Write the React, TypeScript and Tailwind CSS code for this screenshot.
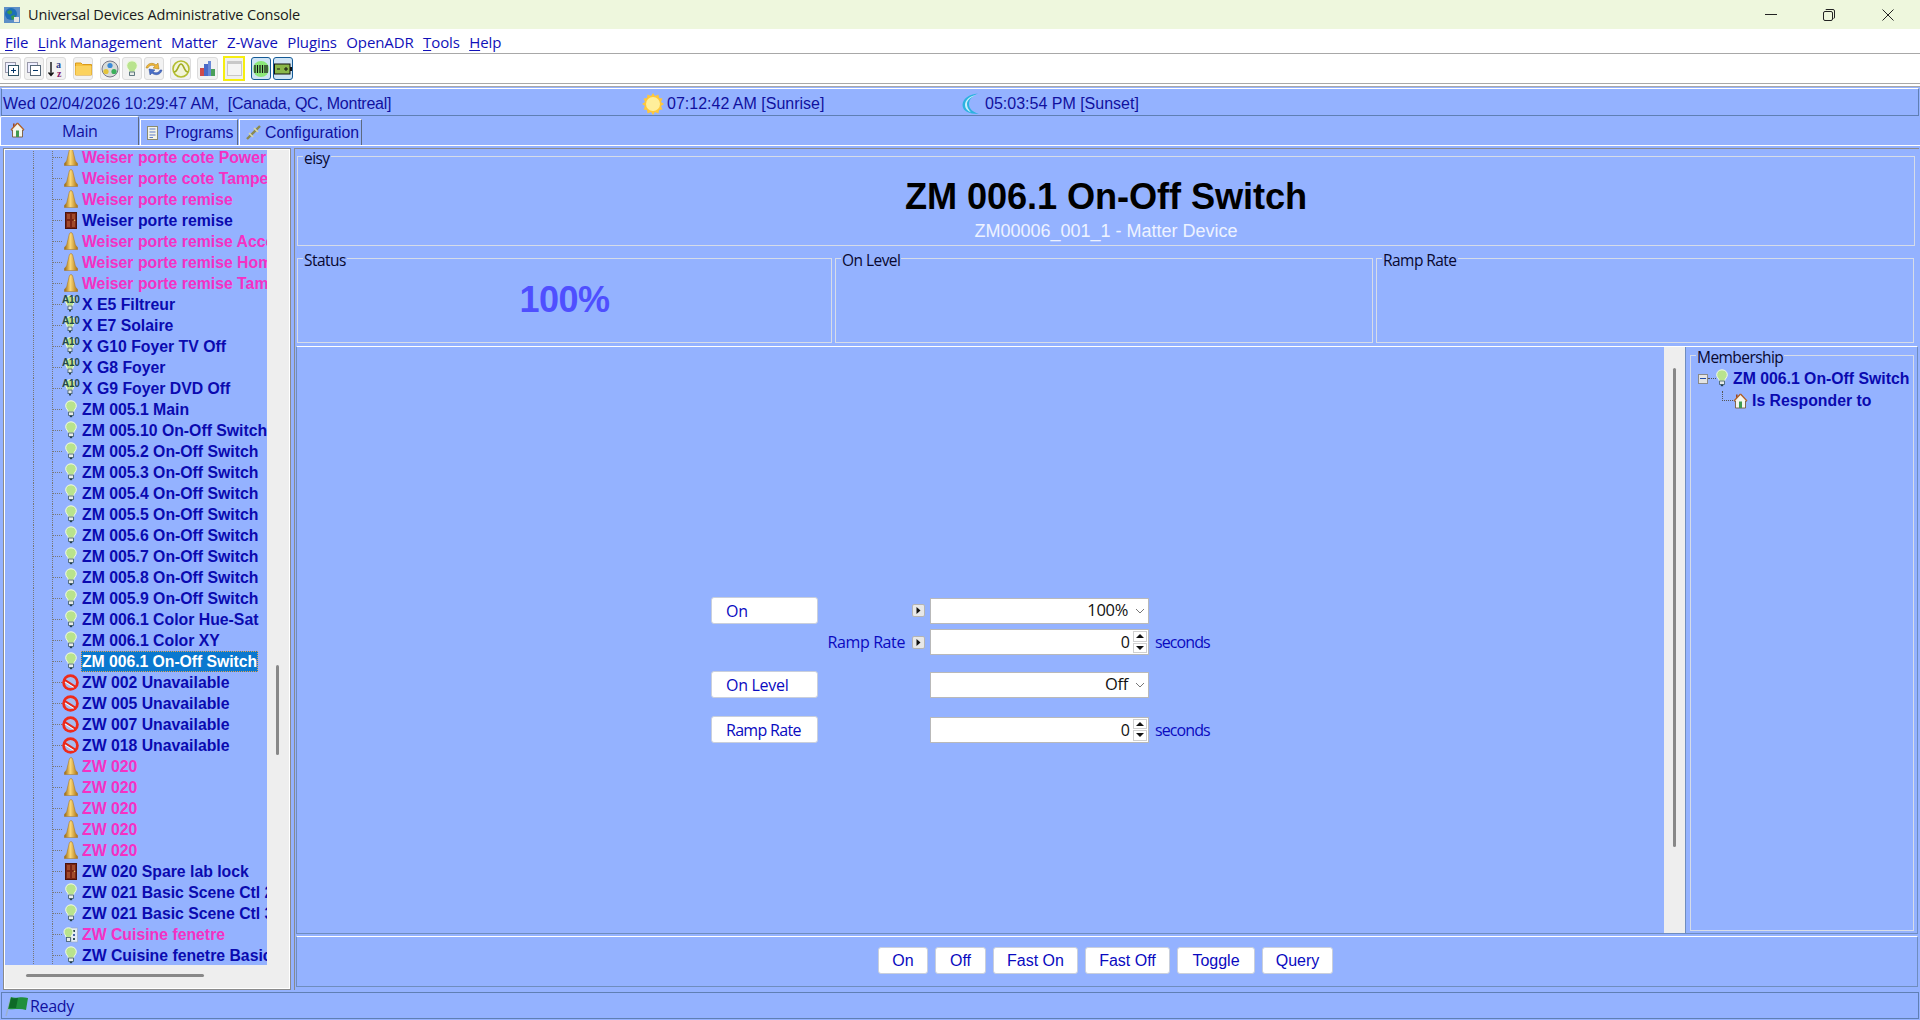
import React from "react";

const Cone = () => (
  <svg width="14" height="18" viewBox="0 0 14 18" className="shrink-0 -mt-[2px]">
    <defs>
      <linearGradient id="cg" x1="0" x2="1" y1="0" y2="0">
        <stop offset="0" stopColor="#96640c" />
        <stop offset="0.45" stopColor="#fbd878" />
        <stop offset="1" stopColor="#ac7210" />
      </linearGradient>
    </defs>
    <path d="M7 0.5 C8.6 0.5 9 3 9.4 5 L11.4 13 L13.6 15.5 L13.6 17.5 L0.4 17.5 L0.4 15.5 L2.6 13 L4.6 5 C5 3 5.4 0.5 7 0.5Z" fill="url(#cg)" stroke="#a8741a" strokeWidth="0.5" />
  </svg>
);
const Door = () => (
  <svg width="12" height="17" viewBox="0 0 12 17" className="shrink-0">
    <rect x="0.5" y="0.5" width="11" height="16" fill="#7a2414" stroke="#4c140c" />
    <rect x="2" y="2" width="3" height="5" fill="#a04a2c" />
    <rect x="7" y="2" width="3" height="5" fill="#a04a2c" />
    <rect x="2" y="9" width="3" height="6" fill="#a04a2c" />
    <rect x="7" y="9" width="3" height="6" fill="#a04a2c" />
    <circle cx="9.5" cy="8.2" r="0.8" fill="#e8c36a" />
  </svg>
);
const Bulb = () => (
  <svg width="12" height="18" viewBox="0 0 12 18" className="shrink-0 -mt-[2px]">
    <path d="M6 0.8 C9.2 0.8 11.3 3 11.3 5.8 C11.3 8.4 9 9.6 8.6 12 L3.4 12 C3 9.6 0.7 8.4 0.7 5.8 C0.7 3 2.8 0.8 6 0.8Z" fill="#b9e38d" stroke="#f3fbe6" strokeWidth="1" />
    <rect x="3.6" y="12" width="4.8" height="3.4" fill="#e8ece8" stroke="#3d5a66" strokeWidth="0.8" />
    <rect x="4.8" y="15.6" width="2.4" height="1.6" fill="#26404c" />
  </svg>
);
const A10 = () => (
  <div className="relative w-[17px] h-[18px] shrink-0 -mt-[2px]">
    <svg width="16" height="18" viewBox="0 0 16 18" className="absolute left-0 top-0">
      <path d="M8 0.8 C11.2 0.8 13 2.6 13 5 C13 7 11 8.4 10.6 11 L5.4 11 C5 8.4 3 7 3 5 C3 2.6 4.8 0.8 8 0.8Z" fill="#b9e38d" stroke="#f3fbe6" strokeWidth="1" />
      <rect x="6" y="11" width="4" height="3.6" fill="#e8ece8" stroke="#3d5a66" strokeWidth="0.8" />
      <rect x="7" y="15" width="2" height="1.5" fill="#26404c" />
    </svg>
    <span className="absolute left-[0px] top-[-1px] text-[10px] leading-[12px] font-bold text-[#24484a] font-['Liberation_Sans',sans-serif] tracking-[-0.3px]">A10</span>
  </div>
);
const NoEntry = () => (
  <svg width="17" height="17" viewBox="0 0 16 16" className="shrink-0">
    <circle cx="8" cy="8" r="7.8" fill="#ee2a1c" />
    <circle cx="8" cy="8" r="5.2" fill="#a8bdf0" />
    <path d="M3 4.6 L13 11 L11.8 12.8 L2 6.6Z" fill="#e8281a" />
    <path d="M2.8 7.4 L11 12.6" stroke="#fff" strokeWidth="1" />
  </svg>
);
const Scene = () => (
  <svg width="15" height="16" viewBox="0 0 15 16" className="shrink-0">
    <rect x="8" y="1" width="6.5" height="14" fill="#e4ecf6" stroke="#9aa8b8" strokeWidth="0.6" />
    <rect x="10" y="3" width="2" height="2" fill="#355" />
    <rect x="10" y="7" width="2" height="2" fill="#46a" />
    <rect x="10" y="11" width="2" height="2" fill="#355" />
    <path d="M5.5 0.8 C8.4 0.8 10 2.6 10 5 C10 7.2 8.2 8.2 7.8 10.5 L3.2 10.5 C2.8 8.2 1 7.2 1 5 C1 2.6 2.6 0.8 5.5 0.8Z" fill="#b9e38d" stroke="#f3fbe6" strokeWidth="1" />
    <rect x="3.5" y="10.5" width="4" height="4" fill="#e8ece8" stroke="#3d5a66" strokeWidth="0.8" />
  </svg>
);
const House = () => (
  <svg width="15" height="16" viewBox="0 0 15 16" className="shrink-0">
    <path d="M7.5 1 L14 8 L12.5 8 L12.5 15 L2.5 15 L2.5 8 L1 8Z" fill="#f4f7ee" stroke="#7a5a3a" strokeWidth="0.9" />
    <rect x="3" y="1.5" width="1.6" height="3.5" fill="#9a4a2a" />
    <rect x="6" y="8.5" width="3" height="6.5" fill="#3f9a50" />
    <path d="M7.5 1 L14 8" stroke="#b5652c" strokeWidth="1.2" />
    <path d="M7.5 1 L1 8" stroke="#b5652c" strokeWidth="1.2" />
  </svg>
);

type Kind = "cone" | "door" | "bulb" | "a10" | "no" | "scene";
const icons: Record<Kind, React.ReactNode> = {
  cone: <Cone />,
  door: <Door />,
  bulb: <Bulb />,
  a10: <A10 />,
  no: <NoEntry />,
  scene: <Scene />,
};

const rows: { t: string; k: Kind; pink?: boolean; sel?: boolean }[] = [
  { t: "Weiser porte cote Power", k: "cone", pink: true },
  { t: "Weiser porte cote Tamper", k: "cone", pink: true },
  { t: "Weiser porte remise", k: "cone", pink: true },
  { t: "Weiser porte remise", k: "door" },
  { t: "Weiser porte remise Access", k: "cone", pink: true },
  { t: "Weiser porte remise Home", k: "cone", pink: true },
  { t: "Weiser porte remise Tamper", k: "cone", pink: true },
  { t: "X E5 Filtreur", k: "a10" },
  { t: "X E7 Solaire", k: "a10" },
  { t: "X G10 Foyer TV Off", k: "a10" },
  { t: "X G8 Foyer", k: "a10" },
  { t: "X G9 Foyer DVD Off", k: "a10" },
  { t: "ZM 005.1 Main", k: "bulb" },
  { t: "ZM 005.10 On-Off Switch", k: "bulb" },
  { t: "ZM 005.2 On-Off Switch", k: "bulb" },
  { t: "ZM 005.3 On-Off Switch", k: "bulb" },
  { t: "ZM 005.4 On-Off Switch", k: "bulb" },
  { t: "ZM 005.5 On-Off Switch", k: "bulb" },
  { t: "ZM 005.6 On-Off Switch", k: "bulb" },
  { t: "ZM 005.7 On-Off Switch", k: "bulb" },
  { t: "ZM 005.8 On-Off Switch", k: "bulb" },
  { t: "ZM 005.9 On-Off Switch", k: "bulb" },
  { t: "ZM 006.1 Color Hue-Sat", k: "bulb" },
  { t: "ZM 006.1 Color XY", k: "bulb" },
  { t: "ZM 006.1 On-Off Switch", k: "bulb", sel: true },
  { t: "ZW 002 Unavailable", k: "no" },
  { t: "ZW 005 Unavailable", k: "no" },
  { t: "ZW 007 Unavailable", k: "no" },
  { t: "ZW 018 Unavailable", k: "no" },
  { t: "ZW 020", k: "cone", pink: true },
  { t: "ZW 020", k: "cone", pink: true },
  { t: "ZW 020", k: "cone", pink: true },
  { t: "ZW 020", k: "cone", pink: true },
  { t: "ZW 020", k: "cone", pink: true },
  { t: "ZW 020 Spare lab lock", k: "door" },
  { t: "ZW 021 Basic Scene Ctl 2", k: "bulb" },
  { t: "ZW 021 Basic Scene Ctl 3", k: "bulb" },
  { t: "ZW Cuisine fenetre", k: "scene", pink: true },
  { t: "ZW Cuisine fenetre Basic", k: "bulb" },
];

const ToolBtn = ({ children, cls = "" }: { children: React.ReactNode; cls?: string }) => (
  <div className={`h-[23px] flex items-center justify-center rounded-[3px] border border-[#dcdcdc] bg-[#f2f2f2] ${cls}`}>{children}</div>
);

const Group = ({ label, cls = "", children }: { label: string; cls?: string; children?: React.ReactNode }) => (
  <div className={`relative border border-[#d6dce8] ${cls}`}>
    <span className="absolute left-[5px] top-[-8px] bg-[#94b2ff] px-[1px] text-[15.5px] leading-[18px] text-[#080830] font-['Open_Sans',sans-serif] tracking-[-0.55px]">{label}</span>
    {children}
  </div>
);

const WhiteBtn = ({ children, cls = "" }: { children: React.ReactNode; cls?: string }) => (
  <div className={`h-[27px] flex items-center bg-white rounded-[3px] border border-[#c9cfdc] text-[16px] text-[#0a0ac0] ${cls}`}>{children}</div>
);

const Arrow = () => (
  <div className="w-[13px] h-[13px] rounded-[2px] bg-[#e8e8e8] border border-[#b4b4b4] flex items-center justify-center">
    <svg width="5" height="7" viewBox="0 0 5 7"><path d="M0.5 0 L4.5 3.5 L0.5 7Z" fill="#111" /></svg>
  </div>
);

const Select = ({ v }: { v: string }) => (
  <div className="w-[219px] h-[26px] bg-white border border-[#b9b9b9] flex items-center justify-end text-[16.5px] text-[#111] pr-[3px] font-['Open_Sans',sans-serif] tracking-[-0.3px]">
    <span className="mr-[7px]">{v}</span>
    <svg width="10" height="6" viewBox="0 0 10 6"><path d="M1 1 L5 5 L9 1" fill="none" stroke="#777" strokeWidth="1" /></svg>
  </div>
);

const Spin = ({ v }: { v: string }) => (
  <>
    <div className="w-[219px] h-[26px] bg-white border border-[#b9b9b9] flex items-center justify-end text-[16px] text-[#111] pr-[1px] font-['Open_Sans',sans-serif]">
      <span className="mr-[3px]">{v}</span>
      <div className="w-[14px] h-[22px] flex flex-col gap-[1px]">
        <div className="h-[10.5px] border border-[#d0d0d0] flex items-center justify-center">
          <svg width="8" height="4" viewBox="0 0 8 4"><path d="M0 4 L4 0 L8 4Z" fill="#111" /></svg>
        </div>
        <div className="h-[10.5px] border border-[#d0d0d0] flex items-center justify-center">
          <svg width="8" height="4" viewBox="0 0 8 4"><path d="M0 0 L4 4 L8 0Z" fill="#111" /></svg>
        </div>
      </div>
    </div>
    <span className="ml-[6px] text-[16px] text-[#0a0ac0] font-['Open_Sans',sans-serif] tracking-[-0.9px]">seconds</span>
  </>
);

const U = ({ children }: { children: React.ReactNode }) => <span className="underline underline-offset-2">{children}</span>;

export default function App() {
  return (
    <div className="w-full h-[1020px] flex flex-col overflow-hidden bg-[#94b2ff] font-['Liberation_Sans',sans-serif]">
      {/* title bar */}
      <div className="h-[29px] shrink-0 bg-[#eef7dd] flex items-center pl-[4px]">
        <svg width="16" height="16" viewBox="0 0 16 16" className="shrink-0">
          <rect width="16" height="16" fill="#5d8fc7" />
          <circle cx="7" cy="7" r="6" fill="#1d6fb8" />
          <path d="M3 5 C5 2 9 3 8 6 C7 8 4 8 3 5Z" fill="#3c9a4a" />
          <path d="M7 9 L11 8 L10 12 L8 13Z" fill="#3c9a4a" />
          <rect x="10" y="10" width="5" height="5" fill="#e4e4e4" />
        </svg>
        <span className="ml-[8px] text-[14.5px] text-[#1a1a1a] font-['Open_Sans',sans-serif] tracking-[-0.15px]">Universal Devices Administrative Console</span>
        <div className="ml-auto flex items-center h-full">
          <svg width="12" height="2" viewBox="0 0 12 2" className="mr-[46px]"><rect width="12" height="1" fill="#222" /></svg>
          <svg width="12" height="12" viewBox="0 0 12 12" className="mr-[47px]">
            <rect x="0.5" y="2.5" width="9" height="9" rx="1.5" fill="none" stroke="#222" />
            <path d="M2.5 1 Q2.5 0.5 4 0.5 L10 0.5 Q11.5 0.5 11.5 2 L11.5 8 Q11.5 9.5 10.5 9.5" fill="none" stroke="#222" />
          </svg>
          <svg width="12" height="12" viewBox="0 0 12 12" className="mr-[26px]"><path d="M0.5 0.5 L11.5 11.5 M11.5 0.5 L0.5 11.5" stroke="#222" strokeWidth="1" /></svg>
        </div>
      </div>
      {/* menu */}
      <div className="h-[25px] shrink-0 bg-white border-b border-[#a8a8a8] flex items-center pt-[2px] pl-[5px] gap-[9.4px] text-[15px] text-[#1010b8] font-['Open_Sans',sans-serif] tracking-[-0.1px]">
        <span><U>F</U>ile</span>
        <span><U>L</U>ink Management</span>
        <span>Matter</span>
        <span>Z-Wave</span>
        <span>Plugi<U>n</U>s</span>
        <span>OpenADR</span>
        <span><U>T</U>ools</span>
        <span><U>H</U>elp</span>
      </div>
      {/* toolbar */}
      <div className="h-[30px] shrink-0 bg-white flex items-center pl-[2px] border-b border-[#a8a8a8]">
        <ToolBtn cls="w-[19px]">
          <svg width="14" height="14" viewBox="0 0 14 14"><rect x="0.5" y="0.5" width="10" height="10" fill="#eef" stroke="#99a" /><rect x="3.5" y="3.5" width="10" height="10" fill="#fff" stroke="#356" /><path d="M6 8.5 H11 M8.5 6 V11" stroke="#036" /></svg>
        </ToolBtn>
        <ToolBtn cls="w-[20px] ml-[3px]">
          <svg width="14" height="14" viewBox="0 0 14 14"><rect x="0.5" y="0.5" width="10" height="10" fill="#eef" stroke="#99a" /><rect x="3.5" y="3.5" width="10" height="10" fill="#fff" stroke="#567" /><path d="M6 8.5 H11" stroke="#036" /></svg>
        </ToolBtn>
        <ToolBtn cls="w-[20px] ml-[2px]">
          <svg width="18" height="18" viewBox="0 0 18 18">
            <path d="M4 2 V15 M1.5 12.5 L4 15.5 L6.5 12.5" fill="none" stroke="#111" strokeWidth="1.4" />
            <text x="9" y="8" fontSize="10" fontWeight="700" fill="#2b3e8c" fontFamily="Liberation Serif">a</text>
            <text x="10" y="17" fontSize="10" fontWeight="700" fill="#86206a" fontFamily="Liberation Serif">z</text>
          </svg>
        </ToolBtn>
        <ToolBtn cls="w-[20px] ml-[7px]">
          <svg width="17" height="15" viewBox="0 0 17 15"><path d="M0.5 2 H6 L7.5 3.5 H16.5 V14 H0.5Z" fill="#f7c23c" stroke="#d99a1c" /><rect x="0.5" y="5" width="16" height="9" fill="#fbd25e" /></svg>
        </ToolBtn>
        <ToolBtn cls="w-[20px] ml-[7px]">
          <svg width="18" height="18" viewBox="0 0 18 18"><circle cx="9" cy="9" r="8" fill="#d8dcd8" stroke="#778" /><circle cx="9" cy="5.5" r="2.6" fill="#3a8ad8" /><circle cx="5" cy="11.5" r="2.6" fill="#e4c43a" /><circle cx="13" cy="11.5" r="2.6" fill="#3aaf5a" /></svg>
        </ToolBtn>
        <ToolBtn cls="w-[20px] ml-[2px]"><svg width="12" height="18" viewBox="0 0 12 18"><path d="M6 0.8 C9.2 0.8 11.3 3 11.3 5.8 C11.3 8.4 9 9.6 8.6 12 L3.4 12 C3 9.6 0.7 8.4 0.7 5.8 C0.7 3 2.8 0.8 6 0.8Z" fill="#b9e38d" stroke="#f3fbe6" strokeWidth="1" /><rect x="3.6" y="12" width="4.8" height="3.4" fill="#e8ece8" stroke="#3d5a66" strokeWidth="0.8" /></svg></ToolBtn>
        <ToolBtn cls="w-[20px] ml-[2px]">
          <svg width="18" height="16" viewBox="0 0 18 16"><path d="M1 7 C2 2 8 1 11 4 L13 2 L14 8 L8 7 L10 5.5 C8 3.5 4 4 3 7Z" fill="#eeb63a" stroke="#a87a14" strokeWidth="0.5" /><path d="M17 9 C16 14 10 15 7 12 L5 14 L4 8 L10 9 L8 10.5 C10 12.5 14 12 15 9Z" fill="#4a6fc8" stroke="#2a4a98" strokeWidth="0.5" /></svg>
        </ToolBtn>
        <ToolBtn cls="w-[21px] ml-[6px]">
          <svg width="18" height="18" viewBox="0 0 18 18"><circle cx="9" cy="9" r="8" fill="#f2f4d8" stroke="#b4be30" strokeWidth="1.6" /><path d="M2 12 C6 12 6 4 9 4 C12 4 12 12 16 12" fill="none" stroke="#a0ac22" strokeWidth="1.6" /></svg>
        </ToolBtn>
        <ToolBtn cls="w-[21px] ml-[6px]">
          <svg width="17" height="17" viewBox="0 0 17 17"><rect x="1" y="8" width="4" height="8" fill="#d04a4a" /><rect x="5" y="4" width="4" height="12" fill="#4a6ac8" /><rect x="9" y="1" width="3" height="15" fill="#6a8ad8" /><rect x="12" y="9" width="4" height="7" fill="#4aa05a" /></svg>
        </ToolBtn>
        <div className="w-[22px] h-[25px] ml-[5px] border-[2px] border-[#f6ee10] bg-[#efefef] flex items-center justify-center">
          <div className="w-[15px] h-[15px] bg-[#f4f4f4] border border-[#c8c8c8] border-t-[3px]" />
        </div>
        <div className="w-[20px] h-[23px] ml-[6px] rounded-[3px] border border-[#145a96] bg-[#cfe4f4] flex items-center justify-center">
          <svg width="16" height="16" viewBox="0 0 16 16"><circle cx="8" cy="8" r="8" fill="#8ce878" /><path d="M2 4 V12 M4.5 4 V12 M7 4 V12 M9.5 4 V12 M12 4 V12 M14 4 V12" stroke="#111" strokeWidth="1.2" /></svg>
        </div>
        <div className="w-[20px] h-[23px] ml-[2px] rounded-[3px] border border-[#145a96] bg-[#cfe4f4] flex items-center justify-center">
          <svg width="18" height="12" viewBox="0 0 18 12"><rect x="0.5" y="1" width="15.5" height="10" fill="#8ab84a" stroke="#111" /><rect x="16" y="4" width="2" height="4" fill="#111" /><path d="M3 6 H6 M10 6 H14 M12 4 V8" stroke="#111" /></svg>
        </div>
      </div>
      <div className="h-[3px] shrink-0 bg-white border-b border-[#a8a8a8]" />
      {/* date bar */}
      <div className="h-[28px] shrink-0 mt-[1px] mx-[1px] border border-[#5f7fb4] border-t-white flex items-center pl-[1px] text-[16px] text-[#10109e] whitespace-pre relative">
        <span className="mt-[3px]">Wed 02/04/2026 10:29:47 AM,  <span className="tracking-[-0.25px]">[Canada, QC, Montreal]</span></span>
        <div className="absolute left-[640px] top-[3px] flex items-center">
          <svg width="22" height="22" viewBox="0 0 22 22" className="shrink-0">
            <path d="M11 0 L13 3 L16.5 1.5 L17 5 L20.5 5.5 L19 9 L22 11 L19 13 L20.5 16.5 L17 17 L16.5 20.5 L13 19 L11 22 L9 19 L5.5 20.5 L5 17 L1.5 16.5 L3 13 L0 11 L3 9 L1.5 5.5 L5 5 L5.5 1.5 L9 3Z" fill="#ffc83a" />
            <circle cx="11" cy="11" r="7" fill="#ffee9a" />
          </svg>
          <span className="ml-[3px]">07:12:42 AM [Sunrise]</span>
        </div>
        <div className="absolute left-[958px] top-[3px] flex items-center">
          <svg width="22" height="22" viewBox="0 0 22 22" className="shrink-0">
            <path d="M18 0.5 C9 1 2.5 6 2.5 12 C2.5 18 9 21 19 21 C13 19 9 16 9 11 C9 6 13 2.5 18 0.5Z" fill="#2cb2e0" />
            <path d="M16 2 C10 3 5 7 5 12 C5 15 7 18 11 19.5 C8 16 7 14 7 11 C7 7 11 4 16 2Z" fill="#c8f0fa" />
          </svg>
          <span className="ml-[3px]">05:03:54 PM [Sunset]</span>
        </div>
      </div>
      {/* tabs */}
      <div className="h-[30px] shrink-0 flex items-end border-b-[1px] border-white text-[16px] text-[#10109e]">
        <div className="w-[139px] h-[29px] border border-white border-b-0 border-r-[#5c6a80] rounded-t-[2px] flex items-center relative">
          <div className="absolute left-[9px] top-[5px]"><House /></div>
          <span className="pl-[61px] font-['Open_Sans',sans-serif] tracking-[-0.4px]">Main</span>
        </div>
        <div className="w-[98px] h-[26px] ml-[1px] border border-white border-b-0 border-r-[#5c6a80] flex items-center pl-[6px]">
          <svg width="12" height="14" viewBox="0 0 12 14" className="shrink-0"><rect x="0.5" y="0.5" width="10" height="13" fill="#f4f4e8" stroke="#8a8a70" /><path d="M2.5 3 H8.5 M2.5 6 H8.5 M2.5 9 H8.5 M2.5 11.5 H6" stroke="#5a7ac8" /></svg>
          <span className="ml-[6px] text-[15.8px]">Programs</span>
        </div>
        <div className="w-[123px] h-[26px] ml-[1px] border border-white border-b-0 border-r-[#5c6a80] flex items-center pl-[6px]">
          <svg width="15" height="15" viewBox="0 0 15 15" className="shrink-0"><path d="M1 14 L14 1" stroke="#8a8a50" strokeWidth="2.4" /><path d="M3 8 L7 12 M8 3 L12 7" stroke="#d8d8a8" strokeWidth="1.6" /></svg>
          <span className="ml-[4px] text-[15.8px]">Configuration</span>
        </div>
      </div>
      {/* body */}
      <div className="flex-1 min-h-0 flex pt-[2px] pl-[3px] pr-[1px]">
        {/* left tree */}
        <div className="w-[288px] shrink-0 h-[842px] border border-[#8a8a8a] p-[1px] bg-white flex flex-col relative">
          <div className="flex-1 min-h-0 flex bg-[#eeeeee]">
            <div className="w-[262px] shrink-0 h-full flex flex-col">
              <div className="h-[815px] shrink-0 bg-[#94b2ff] overflow-hidden">
                <div className="-mt-[3px] pl-[28px]">
                  {rows.map((r, i) => (
                    <div key={i} className="h-[21px] flex items-stretch border-l border-dotted border-[#777]">
                      <div className="w-[18px] shrink-0" />
                      <div className="w-[10px] border-l border-dotted border-[#777] flex items-center shrink-0">
                        <div className="w-full border-t border-dotted border-[#777]" />
                      </div>
                      <div className="w-[19px] flex items-center justify-center shrink-0 -ml-[1px]">{icons[r.k]}</div>
                      <div
                        className={`shrink-0 h-[21px] flex items-center whitespace-nowrap text-[15.8px] font-bold leading-[19px] ${
                          r.sel
                            ? "ml-[1px] bg-[#0a78cf] text-white outline-1 outline-dotted -outline-offset-1 outline-[#e8a050] pl-[1px] pr-[1px] tracking-[-0.06px]"
                            : r.pink
                            ? "ml-[2px] text-[#f530c4]"
                            : "ml-[2px] text-[#0a0ab0]"
                        }`}
                      >
                        {r.t}
                      </div>
                    </div>
                  ))}
                </div>
              </div>
              <div className="flex-1 flex items-center pl-[21px] pb-[2px]">
                <div className="w-[178px] h-[3px] rounded-full bg-[#888]" />
              </div>
            </div>
            <div className="flex-1 pl-[9px] pt-[515px]">
              <div className="w-[3px] h-[90px] rounded-full bg-[#888]" />
            </div>
          </div>
        </div>
        {/* right */}
        <div className="flex-1 min-w-0 ml-[3px] h-[842px] border-l border-t border-[#8a8a8a] flex flex-col pl-[2px] pr-[1px]">
          {/* header */}
          <div className="h-[194px] shrink-0 pt-[7px] flex flex-col pr-[3px]">
            <Group label="eisy" cls="h-[90px] shrink-0 flex flex-col items-center">
              <div className="text-[36.2px] font-bold text-black leading-[40px] mt-[20px] tracking-[-0.1px]">ZM 006.1 On-Off Switch</div>
              <div className="text-[18px] leading-[20px] text-[#eef2ff] mt-[4px]">ZM00006_001_1 - Matter Device</div>
            </Group>
            <div className="flex gap-[3px] mt-[12px] flex-1 pr-[1px]">
              <Group label="Status" cls="w-[535px] flex justify-center">
                <span className="text-[36px] font-bold text-[#4f4fff] leading-[40px] mt-[21px] tracking-[-0.5px]">100%</span>
              </Group>
              <Group label="On Level" cls="w-[538px]" />
              <Group label="Ramp Rate" cls="flex-1" />
            </div>
          </div>
          {/* main */}
          <div className="h-[588px] shrink-0 mt-[3px] flex border border-[#6f8dbe] border-t-white -ml-[1px]">
            <div className="w-[1367px] shrink-0 pl-[414px] pt-[250px] flex flex-col">
              <div className="flex items-center h-[27px]">
                <WhiteBtn cls="w-[107px] pl-[14px] font-['Open_Sans',sans-serif] tracking-[-0.3px]">On</WhiteBtn>
                <div className="w-[88px]" />
                <div className="ml-[6px]"><Arrow /></div>
                <div className="ml-[5px]"><Select v="100%" /></div>
              </div>
              <div className="flex items-center h-[26px] mt-[5px]">
                <div className="w-[107px]" />
                <div className="w-[87px] text-right text-[16px] text-[#0a0ac0] whitespace-nowrap font-['Open_Sans',sans-serif] tracking-[-0.4px]">Ramp Rate</div>
                <div className="ml-[7px]"><Arrow /></div>
                <div className="ml-[5px] flex items-center"><Spin v="0" /></div>
              </div>
              <div className="flex items-center h-[27px] mt-[16px]">
                <WhiteBtn cls="w-[107px] pl-[14px] font-['Open_Sans',sans-serif] tracking-[-0.3px]">On Level</WhiteBtn>
                <div className="w-[112px]" />
                <Select v="Off" />
              </div>
              <div className="flex items-center h-[27px] mt-[18px]">
                <WhiteBtn cls="w-[107px] pl-[14px] font-['Open_Sans',sans-serif] tracking-[-0.7px]">Ramp Rate</WhiteBtn>
                <div className="w-[112px]" />
                <Spin v="0" />
              </div>
            </div>
            <div className="w-[21px] shrink-0 bg-[#eeeeee] pt-[21px] pl-[9px]">
              <div className="w-[3px] h-[479px] rounded-full bg-[#888]" />
            </div>
            <div className="flex-1 border-l border-[#6f8dbe] pl-[4px] pr-[3px] pt-[8px] pb-[2px]">
              <Group label="Membership" cls="h-full">
                <div className="flex items-center h-[21px] pl-[7px] mt-[12px] text-[15.8px] font-bold text-[#0a0ab0] whitespace-nowrap">
                  <div className="w-[10px] h-[10px] bg-[#e4e4e4] border border-[#8a8a8a] flex items-center justify-center shrink-0">
                    <div className="w-[6px] h-[1px] bg-[#234ea8]" />
                  </div>
                  <div className="w-[8px] border-t border-dotted border-[#555] shrink-0" />
                  <Bulb />
                  <span className="ml-[5px]">ZM 006.1 On-Off Switch</span>
                </div>
                <div className="flex items-center h-[21px] mt-[1px] pl-[31px] text-[15.8px] font-bold text-[#0a0ab0] whitespace-nowrap">
                  <div className="w-[11px] h-[10px] border-l border-b border-dotted border-[#555] -mt-[10px] shrink-0" />
                  <House />
                  <span className="ml-[4px]">Is Responder to</span>
                </div>
              </Group>
            </div>
          </div>
          {/* bottom buttons */}
          <div className="h-[51px] shrink-0 mt-[2px] border border-[#6f8dbe] border-t-white -ml-[1px] flex items-center pl-[581px] pb-[2px] gap-[7px] text-[16px]">
            <WhiteBtn cls="w-[50px] justify-center">On</WhiteBtn>
            <WhiteBtn cls="w-[51px] justify-center">Off</WhiteBtn>
            <WhiteBtn cls="w-[85px] justify-center">Fast On</WhiteBtn>
            <WhiteBtn cls="w-[85px] justify-center">Fast Off</WhiteBtn>
            <WhiteBtn cls="w-[78px] justify-center">Toggle</WhiteBtn>
            <WhiteBtn cls="w-[71px] justify-center">Query</WhiteBtn>
          </div>
        </div>
      </div>
      {/* status bar */}
      <div className="h-[27px] shrink-0 mx-[1px] mb-[1px] border border-[#5f7fb4] flex items-center pl-[2px] text-[16px] text-[#10109e]">
        <svg width="24" height="22" viewBox="0 0 24 22" className="shrink-0">
          <path d="M2 21 L7 2" stroke="#9ab0d0" strokeWidth="1.5" />
          <path d="M7 2 C12 4 16 1 24 3 L22 15 C16 13 10 15 4 14Z" fill="#1f8f3c" />
          <path d="M7 3 C10 4 12 3 14 3 L12 13 L5 13Z" fill="#0e6a28" />
        </svg>
        <span className="ml-[2px] mt-[1px] font-['Open_Sans',sans-serif] tracking-[-0.3px]">Ready</span>
      </div>
    </div>
  );
}
